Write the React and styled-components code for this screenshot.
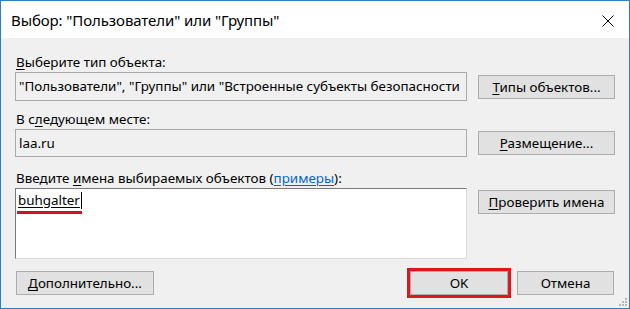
import styled, { createGlobalStyle } from "styled-components";

const Global = createGlobalStyle`
  html, body {
    margin: 0;
    padding: 0;
    background: #ffffff;
  }
  body {
    font-family: "Noto Sans", "Liberation Sans", sans-serif;
  }
`;

const Window = styled.div`
  width: 630px;
  height: 309px;
  box-sizing: border-box;
  border: 1px solid #2f7ec0;
  display: flex;
  flex-direction: column;
  background: #f0f0f0;
  position: relative;
`;

const TitleBar = styled.div`
  height: 37px;
  background: #ffffff;
  display: flex;
  align-items: center;
  justify-content: space-between;
  padding: 2px 15px 0 10px;
  box-sizing: border-box;
`;

const Title = styled.div`
  font-size: 15px;
  color: #000;
  letter-spacing: -0.1px;
  margin-top: -2px;
`;

const Body = styled.div`
  flex: 1;
  padding: 15px 15px 0 14px;
  display: flex;
  flex-direction: column;
`;

const Label = styled.div`
  font-size: 13.4px;
  line-height: 18px;
  height: 18px;
  color: #000;
  margin-top: ${p => p.$top || 0}px;
  padding-left: 1px;
`;

const Row = styled.div`
  display: grid;
  grid-template-columns: 452px 137px;
  column-gap: 11px;
  align-items: start;
  margin-top: 1px;
`;

const Field = styled.div`
  box-sizing: border-box;
  height: ${p => p.$h}px;
  border: 1px solid ${p => (p.$input ? "#dcdcdc" : "#a9a9a9")};
  border-top-color: ${p => (p.$input ? "#7a7a7a" : "#a9a9a9")};
  border-left-color: ${p => (p.$input ? "#7a7a7a" : "#a9a9a9")};
  background: ${p => (p.$input ? "#ffffff" : "#f0f0f0")};
  font-size: 13.4px;
  line-height: 18px;
  padding: ${p => (p.$input ? "2px 2px" : "4px 3px")};
  white-space: nowrap;
  overflow: hidden;
  color: #000;
`;

const Button = styled.button`
  box-sizing: border-box;
  width: ${p => p.$w || 137}px;
  height: 24px;
  margin-top: ${p => p.$mt || 0}px;
  border: 1px solid #adadad;
  background: #e1e1e1;
  font-family: "Noto Sans", "Liberation Sans", sans-serif;
  font-size: 13.4px;
  line-height: 18px;
  color: #000;
  padding: 0;
  text-align: center;
`;

const U = styled.span`
  text-decoration: underline;
  text-underline-offset: 2px;
`;

const Link = styled.span`
  color: #0066cc;
  text-decoration: underline;
  text-underline-offset: 2px;
`;

const Typed = styled.span`
  position: relative;
  display: inline-block;
  text-decoration: underline;
  text-underline-offset: 2px;
  border-right: 1px solid #000;
  padding-right: 1px;
  line-height: 17px;
  &::after {
    content: "";
    position: absolute;
    left: -1px;
    right: -1px;
    bottom: -5px;
    height: 3px;
    background: #c8161e;
  }
`;

const Footer = styled.div`
  display: flex;
  align-items: center;
  margin-top: 9px;
  padding-left: 1px;
`;

const Spacer = styled.div`
  flex: 1;
`;

const Highlight = styled.div`
  border: 3px solid #e0161f;
  margin-right: 6px;
  display: flex;
`;

const Grip = styled.svg`
  position: absolute;
  right: 2px;
  bottom: 2px;
`;

const CloseIcon = () => (
  <svg width="12" height="12" viewBox="0 0 12 12">
    <path d="M0.5 0.5 L11.5 11.5 M11.5 0.5 L0.5 11.5" stroke="#000" strokeWidth="1" />
  </svg>
);

export default function App() {
  return (
    <>
      <Global />
      <Window>
        <TitleBar>
          <Title>Выбор: "Пользователи" или "Группы"</Title>
          <CloseIcon />
        </TitleBar>
        <Body>
          <Label>
            <U>В</U>ыберите тип объекта:
          </Label>
          <Row>
            <Field $h={29}>"Пользователи", "Группы" или "Встроенные субъекты безопасности</Field>
            <Button $mt={3}>
              <U>Т</U>ипы объектов...
            </Button>
          </Row>
          <Label $top={9}>
            В с<U>л</U>едующем месте:
          </Label>
          <Row>
            <Field $h={28}>laa.ru</Field>
            <Button $mt={2}>
              <U>Р</U>азмещение...
            </Button>
          </Row>
          <Label $top={12}>
            Введите <U>и</U>мена выбираемых объектов (<Link>примеры</Link>):
          </Label>
          <Row>
            <Field $h={71} $input>
              <Typed>buhgalter</Typed>
            </Field>
            <Button $mt={2}>
              <U>П</U>роверить имена
            </Button>
          </Row>
          <Footer>
            <Button $w={138}>
              <U>Д</U>ополнительно...
            </Button>
            <Spacer />
            <Highlight>
              <Button $w={98}>OK</Button>
            </Highlight>
            <Button $w={97}>Отмена</Button>
          </Footer>
        </Body>
        <Grip width="8" height="8" viewBox="0 0 8 8">
          <rect x="6" y="0" width="2" height="2" fill="#b8b8b8" />
          <rect x="3" y="3" width="2" height="2" fill="#b8b8b8" />
          <rect x="6" y="3" width="2" height="2" fill="#b8b8b8" />
          <rect x="0" y="6" width="2" height="2" fill="#b8b8b8" />
          <rect x="3" y="6" width="2" height="2" fill="#b8b8b8" />
          <rect x="6" y="6" width="2" height="2" fill="#b8b8b8" />
        </Grip>
      </Window>
    </>
  );
}
